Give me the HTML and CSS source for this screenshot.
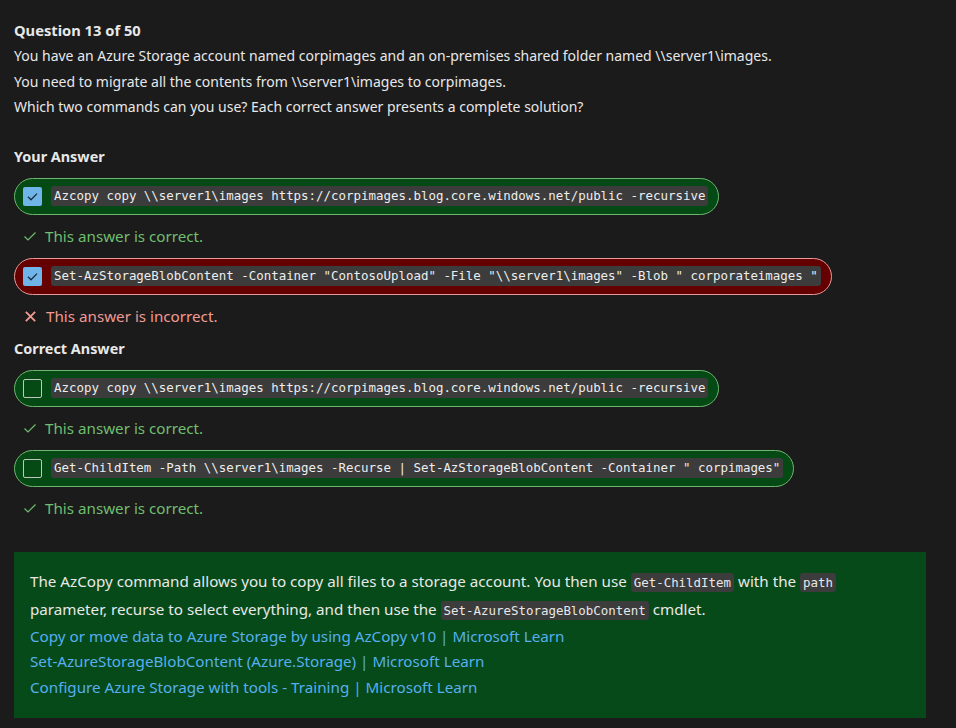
FILE: index.html
```html
<!DOCTYPE html>
<html lang="en">
<head>
<meta charset="utf-8">
<title>Question 13 of 50</title>
<link rel="stylesheet" href="styles.css">
</head>
<body>
<main class="quiz">
  <h2 class="q-title">Question 13 of 50</h2>
  <p class="q-line">You have an Azure Storage account named corpimages and an on-premises shared folder named \\server1\images.</p>
  <p class="q-line">You need to migrate all the contents from \\server1\images to corpimages.</p>
  <p class="q-line">Which two commands can you use? Each correct answer presents a complete solution?</p>

  <h3 class="section first">Your Answer</h3>
  <div class="option good">
    <span class="box checked"><svg viewBox="0 0 19 19" width="19" height="19"><path d="M5 9.8 L8 12.8 L14 6.6" fill="none" stroke="#1c2a36" stroke-width="1.3"/></svg></span>
    <code class="cmd">Azcopy copy \\server1\images https://corpimages.blog.core.windows.net/public -recursive</code>
  </div>
  <div class="verdict ok"><svg class="vicon" viewBox="0 0 14 14" width="14" height="14"><path d="M1.5 7.5 L5 11 L12.5 3.5" fill="none" stroke="currentColor" stroke-width="1.2"/></svg>This answer is correct.</div>
  <div class="option bad">
    <span class="box checked"><svg viewBox="0 0 19 19" width="19" height="19"><path d="M5 9.8 L8 12.8 L14 6.6" fill="none" stroke="#1c2a36" stroke-width="1.3"/></svg></span>
    <code class="cmd">Set-AzStorageBlobContent -Container "ContosoUpload" -File "\\server1\images" -Blob " corporateimages "</code>
  </div>
  <div class="verdict no"><svg class="vicon" viewBox="0 0 14 14" width="13" height="13"><path d="M2 2 L12 12 M12 2 L2 12" fill="none" stroke="currentColor" stroke-width="2"/></svg>This answer is incorrect.</div>

  <h3 class="section">Correct Answer</h3>
  <div class="option good">
    <span class="box"></span>
    <code class="cmd">Azcopy copy \\server1\images https://corpimages.blog.core.windows.net/public -recursive</code>
  </div>
  <div class="verdict ok"><svg class="vicon" viewBox="0 0 14 14" width="14" height="14"><path d="M1.5 7.5 L5 11 L12.5 3.5" fill="none" stroke="currentColor" stroke-width="1.2"/></svg>This answer is correct.</div>
  <div class="option good">
    <span class="box"></span>
    <code class="cmd">Get-ChildItem -Path \\server1\images -Recurse | Set-AzStorageBlobContent -Container " corpimages"</code>
  </div>
  <div class="verdict ok"><svg class="vicon" viewBox="0 0 14 14" width="14" height="14"><path d="M1.5 7.5 L5 11 L12.5 3.5" fill="none" stroke="currentColor" stroke-width="1.2"/></svg>This answer is correct.</div>

  <section class="explain">
    <p class="ex-text">The AzCopy command allows you to copy all files to a storage account. You then use <code class="ic">Get-ChildItem</code> with the <code class="ic">path</code> parameter, recurse to select everything, and then use the <code class="ic">Set-AzureStorageBlobContent</code> cmdlet.</p>
    <a class="ex-link" href="#">Copy or move data to Azure Storage by using AzCopy v10 | Microsoft Learn</a>
    <a class="ex-link" href="#">Set-AzureStorageBlobContent (Azure.Storage) | Microsoft Learn</a>
    <a class="ex-link" href="#">Configure Azure Storage with tools - Training | Microsoft Learn</a>
  </section>
</main>
</body>
</html>
```

FILE: styles.css
```css
html, body {
  margin: 0;
  padding: 0;
  background: #1b1b1b;
}
body {
  font-family: "Noto Sans", "Open Sans", sans-serif;
  font-size: 14px;
  color: #e8e8e8;
}
.quiz {
  padding: 18px 30px 10px 14px;
  display: flex;
  flex-direction: column;
  align-items: flex-start;
}
.q-title {
  margin: 0;
  font-size: 14.7px;
  font-weight: 700;
  line-height: 25px;
}
.q-line {
  margin: 0;
  font-size: 14px;
  line-height: 25.5px;
}
.section {
  margin: 0 0 10px;
  font-size: 14.4px;
  font-weight: 700;
  line-height: 22px;
}
.section.first { margin-top: 26px; }
.option {
  display: flex;
  align-items: center;
  gap: 9px;
  box-sizing: border-box;
  height: 37px;
  padding: 0 10px 0 8px;
  border-radius: 19px;
  border: 1px solid #6fb56f;
  background: #054a14;
}
.option.bad {
  background: #640000;
  border-color: #e79a9a;
}
.box {
  width: 19px;
  height: 19px;
  box-sizing: border-box;
  border: 1px solid #bfc8bf;
  border-radius: 2px;
  flex: none;
}
.box.checked {
  border: none;
  background: #70b5ea;
}
.box svg { display: block; }
.cmd {
  font-family: "DejaVu Sans Mono", "Liberation Mono", monospace;
  font-size: 12.45px;
  line-height: 20px;
  background: #3c3c3c;
  color: #eeeeee;
  padding: 0 3px;
  border-radius: 3px;
  white-space: pre;
}
.verdict {
  display: flex;
  align-items: center;
  gap: 8px;
  padding-left: 9px;
  box-sizing: border-box;
  height: 43px;
  font-size: 15.2px;
}
.verdict.ok { color: #6fbf6f; }
.verdict.no { color: #f19a92; }
.verdict.no .vicon { margin-left: 1px; margin-right: 1px; }
.vicon { flex: none; display: block; }
.explain {
  margin-top: 22px;
  align-self: stretch;
  box-sizing: border-box;
  width: 912px;
  background: #054a18;
  padding: 16px 40px 18px 16px;
  display: flex;
  flex-direction: column;
  font-size: 15.2px;
}
.ex-text {
  margin: 0;
  line-height: 27px;
}
.ic {
  font-family: "DejaVu Sans Mono", "Liberation Mono", monospace;
  font-size: 12.45px;
  background: #3c3c3c;
  padding: 2px 3px;
  border-radius: 3px;
}
.ex-link {
  color: #58aeef;
  text-decoration: none;
  line-height: 25.5px;
}
```
